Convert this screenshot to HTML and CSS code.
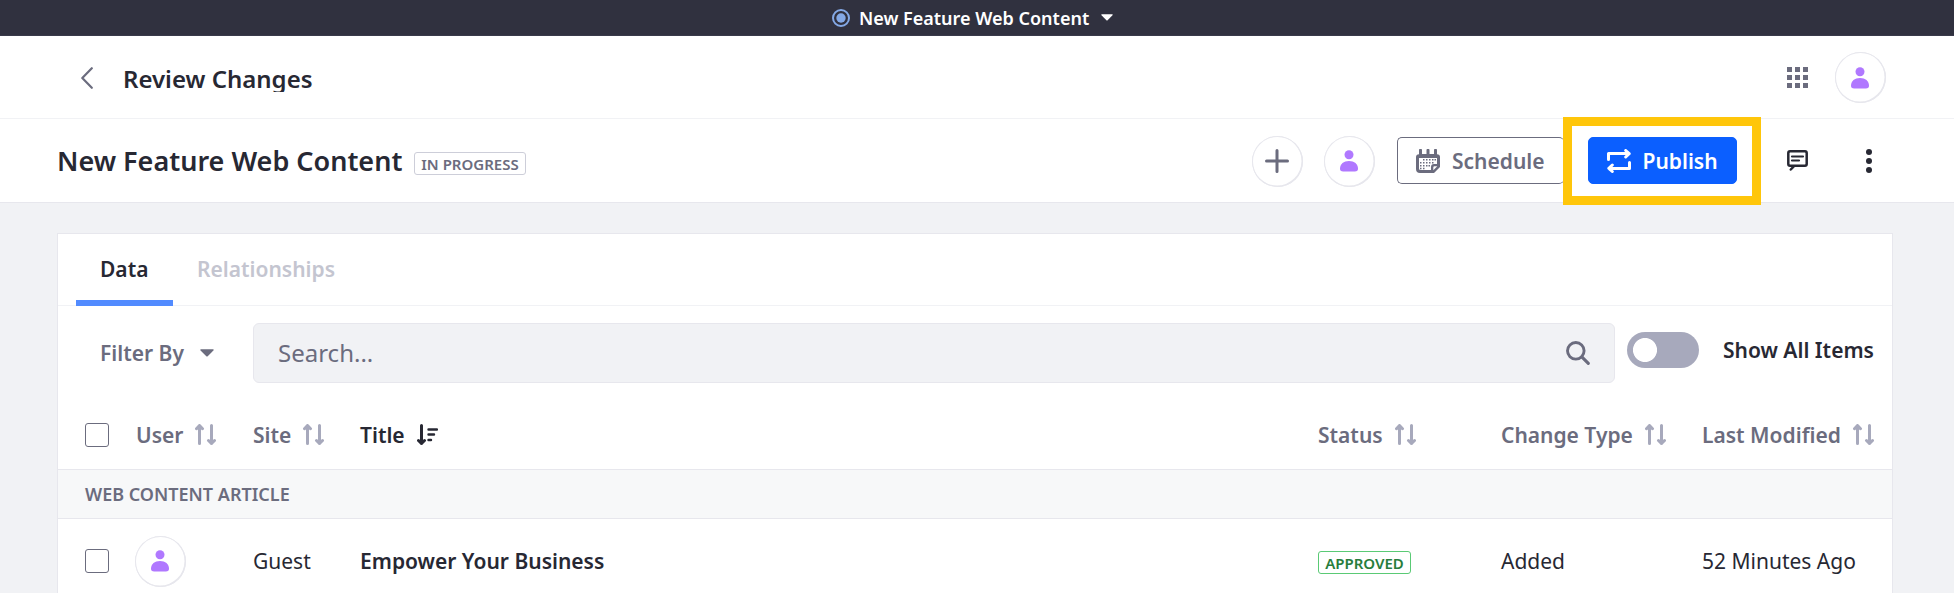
FILE: index.html
```
<!DOCTYPE html>
<html lang="en">
<head>
<meta charset="utf-8">
<title>Review Changes</title>
<link rel="stylesheet" href="styles.css">
</head>
<body>
<svg class="defs" aria-hidden="true">
  <symbol id="user" viewBox="0 0 18 22"><circle cx="9" cy="4.700" r="4.500"/><path d="M9 11c5.300 0 9 3 9 7.600 0 2.200-1 3-3.200 3H3.200C1 21.600 0 20.800 0 18.600 0 14 3.700 11 9 11z"/></symbol>
  <symbol id="sort" viewBox="0 0 21 21"><path d="M4.500 1.500V19.500M1.500 4.700L4.500 1.500L7.500 4.700M16.500 1.500V19.500M13.500 16.500L16.500 19.500L19.500 16.500" fill="none" stroke="currentColor" stroke-width="3" stroke-linecap="round" stroke-linejoin="round"/></symbol>
  <symbol id="caret" viewBox="0 0 14 8"><path d="M1 .3h12q1.200.2.400 1.200L7.700 7.300q-.7.600-1.400 0L.6 1.500Q-.2.500 1 .3z"/></symbol>
</svg>
<div class="topbar">
  <svg class="radio" viewBox="0 0 18 18"><circle cx="9" cy="9" r="8" fill="none" stroke="currentColor" stroke-width="2"/><circle cx="9" cy="9" r="4.700" fill="currentColor"/></svg>
  <span>New Feature Web Content</span>
  <svg class="caret"><use href="#caret"/></svg>
</div>
<header class="header">
  <svg class="back" viewBox="0 0 12 22"><path d="M10.800 1.200L1.300 11L10.800 20.800" fill="none" stroke="currentColor" stroke-width="2.200" stroke-linecap="round" stroke-linejoin="round"/></svg>
  <h1>Review Changes</h1>
  <svg class="apps" viewBox="0 0 21 21"><path d="M0 0h5v5H0zM8 0h5v5H8zM16 0h5v5h-5zM0 8h5v5H0zM8 8h5v5H8zM16 8h5v5h-5zM0 16h5v5H0zM8 16h5v5H8zM16 16h5v5h-5z"/></svg>
  <span class="avatar"><svg><use href="#user"/></svg></span>
</header>
<section class="toolbar">
  <h2>New Feature Web Content</h2>
  <span class="label progress">IN PROGRESS</span>
  <span class="avatar plus"><svg viewBox="0 0 24 24"><path d="M12 1.500v21M1.500 12h21" stroke="currentColor" stroke-width="3" stroke-linecap="round"/></svg></span>
  <span class="avatar second"><svg><use href="#user"/></svg></span>
  <button class="btn schedule">
    <svg viewBox="0 0 24 24"><path fill="currentColor" fill-rule="evenodd" d="M3 1.200a1.500 1.500 0 0 1 3 0V5h4.500V1.200a1.500 1.500 0 0 1 3 0V5H18V1.200a1.500 1.500 0 0 1 3 0V5.200Q24 5.500 24 8V18L18 24H4Q0 24 0 20V8Q0 5.500 3 5.200zM3 9V19.500Q3 21 4.500 21H15V18Q15 15 18 15H21V9zM17.300 21.300L21.300 17.300H18.500Q17.300 17.300 17.300 18.500z"/><path fill="currentColor" d="M7 10h1.500v1.500H7zM10 10h1.500v1.500H10zM13 10h1.500v1.500H13zM16 10h1.500v1.500H16zM18.500 10H20v1.500h-1.500zM4 13h1.500v1.500H4zM7 13h1.500v1.500H7zM10 13h1.500v1.500H10zM13 13h1.500v1.500H13zM16 13h1.500v1.500H16zM4 16h1.500v1.500H4zM7 16h1.500v1.500H7zM10 16h1.500v1.500H10zM12.500 16H14v1.500h-1.500zM4 18.700h1.500v1.500H4zM7 18.700h1.500v1.500H7z"/></svg>
    <span>Schedule</span>
  </button>
  <span class="highlight"><button class="btn publish">
    <svg viewBox="0 0 24 24"><path d="M1.500 10.500V4.500H22M18.700 1.500L22.200 4.700L18.700 8M22.500 13.500V19.500H2M5.300 16L1.800 19.300L5.300 22.500" fill="none" stroke="currentColor" stroke-width="3" stroke-linecap="round" stroke-linejoin="round"/></svg>
    <span>Publish</span>
  </button></span>
  <svg class="comment" viewBox="0 0 21 21"><path d="M3 1.300H18Q19.700 1.300 19.700 3V14Q19.700 15.700 18 15.700H7.500L3.800 19.500M7.500 15.700H3Q1.300 15.700 1.300 14V3Q1.300 1.300 3 1.300" fill="none" stroke="currentColor" stroke-width="2.500" stroke-linecap="round" stroke-linejoin="round"/><path d="M5 6.500h11M5 10.500h7" stroke="currentColor" stroke-width="2.200" stroke-linecap="round"/></svg>
  <svg class="kebab" viewBox="0 0 6 24"><circle cx="3" cy="3" r="3"/><circle cx="3" cy="12" r="3"/><circle cx="3" cy="21" r="3"/></svg>
</section>
<main class="card">
  <nav class="tabs"><span class="tab active">Data</span><span class="tab">Relationships</span></nav>
  <div class="filters">
    <span class="filter">Filter By</span><svg class="caret"><use href="#caret"/></svg>
    <div class="search"><span>Search...</span><svg viewBox="0 0 24 24"><circle cx="9.800" cy="9.800" r="8.300" fill="none" stroke="currentColor" stroke-width="2.900"/><path d="M15.800 15.800L22.300 22.300" stroke="currentColor" stroke-width="3.100" stroke-linecap="round"/></svg></div>
    <span class="toggle"></span>
    <span class="show">Show All Items</span>
  </div>
  <div class="row head">
    <span class="check"></span>
    <span class="cell">User<svg class="sort"><use href="#sort"/></svg></span>
    <span class="cell">Site<svg class="sort"><use href="#sort"/></svg></span>
    <span class="cell sorted">Title<svg class="sort" viewBox="0 0 21 21"><path d="M4.500 1.500V19.500M1.500 16.500L4.500 19.500L7.500 16.500" fill="none" stroke="currentColor" stroke-width="3" stroke-linecap="round" stroke-linejoin="round"/><path d="M11.500 5.500H20M11.500 10.500H17M11.500 16H14" stroke="currentColor" stroke-width="2.400" stroke-linecap="round"/></svg></span>
    <span class="cell">Status<svg class="sort"><use href="#sort"/></svg></span>
    <span class="cell">Change Type<svg class="sort"><use href="#sort"/></svg></span>
    <span class="cell">Last Modified<svg class="sort"><use href="#sort"/></svg></span>
  </div>
  <div class="group">WEB CONTENT ARTICLE</div>
  <div class="row item">
    <span class="check"></span>
    <span class="avatar"><svg><use href="#user"/></svg></span>
    <span>Guest</span>
    <span class="name">Empower Your Business</span>
    <span class="status"><span class="label approved">APPROVED</span></span>
    <span>Added</span>
    <span>52 Minutes Ago</span>
  </div>
</main>
</body>
</html>
```
FILE: styles.css
```
* { box-sizing: border-box; }
body {
  margin: 0;
  height: 593px;
  overflow: hidden;
  background: #f1f2f5;
  color: #272833;
  font: 400 21px/32px "Noto Sans", sans-serif;
}
svg { display: block; flex: none; fill: currentColor; }
.defs { position: absolute; width: 0; height: 0; }
h1, h2 { margin: 0; font-weight: 600; }

.topbar {
  display: flex;
  align-items: center;
  height: 36px;
  padding-left: 832px;
  background: #30313f;
  border-bottom: 1px solid #393a4a;
  color: #fff;
  font-size: 18px;
  font-weight: 600;
}
.radio { width: 18px; height: 18px; margin-right: 9px; color: #84a9e6; }
.topbar span { width: 242px; white-space: nowrap; }
.topbar .caret { width: 12px; height: 7px; }

.header {
  display: flex;
  align-items: center;
  height: 83px;
  padding: 1px 68px 0 81px;
  background: #fff;
  border-bottom: 1px solid #f1f2f5;
}
.back { width: 12px; height: 22px; margin-right: 30px; color: #6b6c7e; }
h1 { margin: 0 auto 0 0; height: 28px; overflow: hidden; font-size: 24px; line-height: 29px; }
.apps { width: 21px; height: 21px; margin-right: 27px; color: #6b6c7e; }

.avatar {
  display: flex;
  flex: none;
  align-items: center;
  justify-content: center;
  width: 51px;
  height: 51px;
  padding: 0 1px 0 0;
  border-radius: 50%;
  background: #fff;
  box-shadow: inset 0 0 0 1px #e7e7ed, inset -.5px -.5px 0 1px #e7e7ed;
  color: #b078ff;
}
.avatar svg { width: 18px; height: 22px; }

.toolbar {
  display: flex;
  align-items: center;
  height: 84px;
  padding: 0 82px 0 57px;
  background: #fff;
  border-bottom: 1px solid #e7e7ed;
}
h2 { width: 357px; font-size: 27px; white-space: nowrap; }
.label {
  display: inline-flex;
  align-items: center;
  justify-content: center;
  height: 23px;
  padding-top: 2px;
  border: 1px solid;
  border-radius: 3px;
  font-size: 15px;
  font-weight: 600;
  line-height: 19px;
}
.progress { width: 112px; margin: 6px auto 0 0; border-color: #cdced9; color: #6b6c7e; }
.toolbar .avatar { margin-top: 1px; }
.plus { color: #6b6c7e; margin-right: 21px; }
.plus svg { width: 24px; height: 24px; }
.second { margin-right: 22px; }
.btn {
  display: flex;
  align-items: center;
  height: 47px;
  padding: 0 18px;
  border: 1px solid;
  border-radius: 5px;
  font: 600 21px/32px "Noto Sans", sans-serif;
}
.btn svg { width: 24px; height: 24px; margin-right: 12px; }
.schedule { width: 167px; margin-right: -1px; border-color: #6b6c7e; border-right: 0; background: #fff; color: #6b6c7e; }
.publish { width: 149px; border-color: #0b5fff; background: #0b5fff; color: #fff; }
.highlight {
  display: flex;
  flex: none;
  align-items: center;
  justify-content: center;
  width: 198px;
  height: 88px;
  border: 9px solid #ffc60a;
  background: #fff;
  z-index: 1;
}
.comment { width: 21px; height: 21px; margin: 0 58px 0 26px; }
.kebab { width: 6px; height: 24px; }

.card {
  width: 1836px;
  height: 380px;
  margin: 30px 0 0 57px;
  border: 1px solid #e7e7ed;
  background: #fff;
}
.tabs { display: flex; height: 72px; padding-left: 18px; border-bottom: 1px solid #f1f2f5; font-weight: 600; }
.tab { height: 72px; padding: 19px 24px 0; color: #c4c5d0; }
.tab.active { width: 97px; border-bottom: 6px solid #528bff; color: #272833; }
.filters { display: flex; align-items: center; height: 94px; padding-left: 42px; font-weight: 600; }
.filter { width: 100px; color: #6b6c7e; }
.filters .caret { width: 14px; height: 8px; margin-right: 39px; color: #6b6c7e; }
.search {
  display: flex;
  align-items: center;
  justify-content: space-between;
  width: 1362px;
  height: 60px;
  padding: 0 24px;
  border: 1px solid #e7e7ed;
  border-radius: 6px;
  background: #f1f2f5;
  color: #6b6c7e;
  font-size: 24px;
  font-weight: 400;
}
.search svg { width: 24px; height: 24px; }
.toggle {
  width: 72px;
  height: 36px;
  margin: -6px 24px 0 12px;
  border-radius: 18px;
  background: radial-gradient(circle at 18px 18px, #fff 11.600px, #a7a9bc 12.400px);
}
.show { margin-top: -6px; white-space: nowrap; }
.row {
  display: grid;
  grid-template-columns: 50px 118px 107px 958px 183px 201px 190px;
  align-items: center;
  padding-left: 27px;
  white-space: nowrap;
}
.head { height: 70px; border-bottom: 1px solid #e7e7ed; font-weight: 600; color: #6b6c7e; }
.head .check { margin-top: 1px; }
.cell { display: flex; align-items: center; }
.head .cell:nth-child(2) { padding-left: 1px; }
.sort { width: 21px; height: 21px; margin-left: 12px; color: #a7a9bc; }
.sorted, .sorted .sort { color: #272833; }
.check { width: 24px; height: 24px; border: 1px solid #6b6c7e; border-radius: 3px; }
.group {
  height: 49px;
  padding: 8px 0 0 27px;
  border-bottom: 1px solid #e7e7ed;
  background: #f7f8f9;
  color: #6b6c7e;
  font-size: 18px;
  font-weight: 600;
}
.item { height: 84px; }
.name { font-weight: 600; }
.status { display: flex; padding-top: 3px; }
.approved { width: 93px; border-color: #5aca75; color: #287d3c; }
```
